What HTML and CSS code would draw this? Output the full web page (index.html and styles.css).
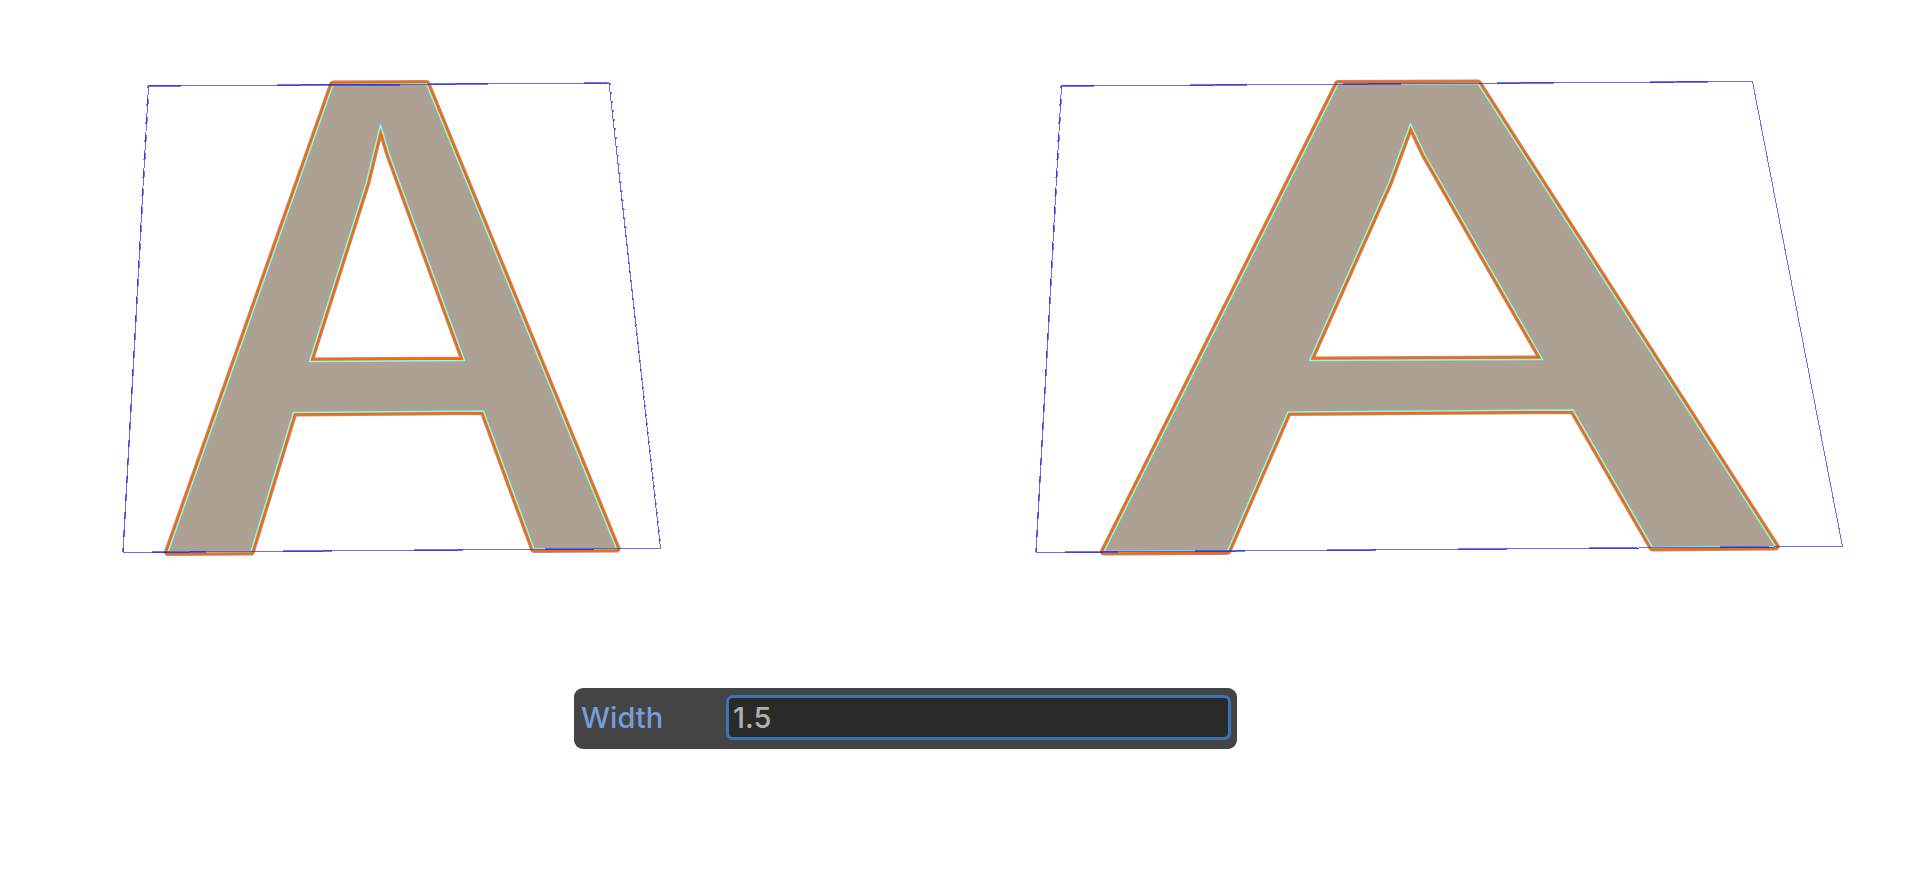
FILE: index.html
```
<!DOCTYPE html>
<html lang="en">
<head>
<meta charset="utf-8">
<title>Width</title>
<link rel="stylesheet" href="styles.css">
</head>
<body>
<main class="page">
  <div class="views">
    <svg class="view" viewBox="0 0 959 600" role="img" aria-label="Mesh at width 1">
      <defs>
        <path id="mesh-a" fill-rule="evenodd" d="M333 84.5L426.5 84L616.5 548.5L534 549L483.5 411L293.5 412.5L251 551.5L168 552ZM380.5 125L366 184L309.5 361.5L464.5 360.5L389.5 155Z"/>
      </defs>
      <use href="#mesh-a" class="halo"/>
      <use href="#mesh-a" class="edge"/>
      <use href="#mesh-a" class="face"/>
      <use href="#mesh-a" class="wire"/>
      <path class="bounds" d="M148.5 86L609 83L660.5 548.5L123 552.5Z"/>
      <path class="ticks-tall" d="M148.5 86L123 552"/>
      <path class="ticks-short" d="M609.5 83L661 548"/>
      <path class="bounds-bold" d="M149 86H181M277 85H332M332 84.5H400M430 84H488M584 83H609M152 552H206M283 551H332M414 550H463M545 549H594"/>
    </svg>
    <svg class="view" viewBox="959 0 959 600" role="img" aria-label="Mesh at width 1.5">
      <defs>
        <path id="mesh-b" fill-rule="evenodd" d="M1338 84L1478 83.5L1775.5 546.5L1652.5 547.5L1573 410L1288 412L1227.5 551L1104 551.5ZM1410.5 124L1388.5 183.5L1309.5 360.5L1542.5 359.5L1425 155Z"/>
      </defs>
      <use href="#mesh-b" class="halo"/>
      <use href="#mesh-b" class="edge"/>
      <use href="#mesh-b" class="face"/>
      <use href="#mesh-b" class="wire"/>
      <path class="bounds" d="M1061.5 86L1752.5 81.5L1842.5 546.5L1036 552.5Z"/>
      <path class="ticks-tall" d="M1061.5 86L1036 552"/>
      <path class="bounds-bold" d="M1062 86H1094M1190 85H1247M1343 84H1401M1497 83H1554M1650 82H1708M1065 552H1118M1195 551H1245M1327 550H1376M1458 549H1507M1589 548H1638M1720 547H1769"/>
    </svg>
  </div>
  <form class="field">
    <label class="field-label" for="width">Width</label>
    <input class="field-input" id="width" type="text" value="1.5">
  </form>
</main>
</body>
</html>
```
FILE: styles.css
```
* { box-sizing: border-box; }
body {
  margin: 0;
  background: #fff;
  font-family: Inter, "Liberation Sans", sans-serif;
}
.views { display: flex; }
.view {
  display: block;
  flex: 1;
  min-width: 0;
}
.view path, .view use {
  stroke-linejoin: round;
}
.halo {
  fill: none;
  stroke: #5a2018;
  stroke-opacity: 0.5;
  stroke-width: 8;
}
.edge {
  fill: none;
  stroke: #ff6500;
  stroke-width: 6;
}
.face { fill: #ada194; }
.wire {
  fill: none;
  stroke: #7dfff5;
  stroke-width: 1.5;
}
.bounds {
  fill: none;
  stroke: #2020d4;
  stroke-opacity: 0.65;
  stroke-width: 1;
  shape-rendering: crispEdges;
}
.bounds-bold, .ticks-tall, .ticks-short {
  fill: none;
  stroke: #2020e0;
  stroke-opacity: 0.6;
  stroke-width: 2;
  shape-rendering: crispEdges;
}
.ticks-tall {
  stroke-dasharray: 7 11;
  stroke-dashoffset: 5;
}
.ticks-short {
  stroke-dasharray: 2 7;
}
.field {
  display: flex;
  align-items: center;
  width: 663px;
  max-width: 100%;
  margin: 88px 0 0 574px;
  padding: 7px 6px 9px;
  border-radius: 9px;
  background: #444;
}
.field-label {
  flex: 0 0 146px;
  padding-left: 1px;
  font-size: 29px;
  font-weight: 500;
  line-height: 36px;
  color: #769cdc;
}
.field-input {
  flex: 1;
  min-width: 0;
  height: 45px;
  padding: 0 4px;
  border: 3px solid #3a74b4;
  border-radius: 7px;
  outline: none;
  background: #2a2a2a;
  color: #b0b0b0;
  font: 500 29px/36px Inter, "Liberation Sans", sans-serif;
}
```
